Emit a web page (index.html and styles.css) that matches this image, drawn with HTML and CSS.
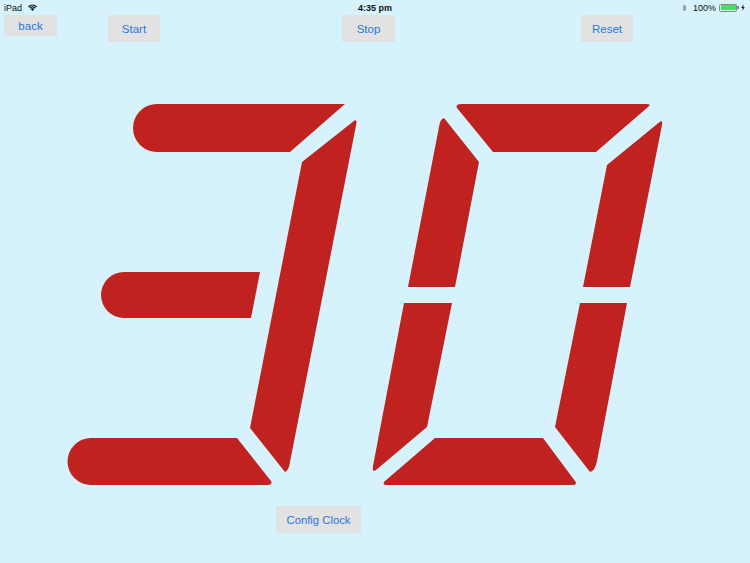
FILE: index.html
```html
<!DOCTYPE html>
<html>
<head>
<meta charset="utf-8">
<link rel="stylesheet" href="styles.css">
</head>
<body>
<div class="status">
  <div class="st-left">
    <span>iPad</span>
    <svg class="wifi" width="9" height="7" viewBox="0 0 9 7">
      <path d="M4.5 7 L0 2.2 A6.5 6.5 0 0 1 9 2.2 Z" fill="#111"/>
      <path d="M1.2 3.4 A4.8 4.8 0 0 1 7.8 3.4" fill="none" stroke="#d6f3fd" stroke-width="0.8"/>
      <path d="M2.4 4.7 A3 3 0 0 1 6.6 4.7" fill="none" stroke="#d6f3fd" stroke-width="0.8"/>
    </svg>
  </div>
  <div class="st-center">4:35 pm</div>
  <div class="st-right">
    <svg class="bt" width="5" height="8" viewBox="0 0 5 8">
      <path d="M0.5 2 L4 5.2 L2.2 7 L2.2 1 L4 2.8 L0.5 6" fill="none" stroke="#777" stroke-width="0.8"/>
    </svg>
    <span>100%</span>
    <span class="battery"><span class="level"></span></span>
    <svg class="bolt" width="4" height="7" viewBox="0 0 4 7">
      <path d="M2.6 0 L0.3 3.9 L1.8 3.9 L1.3 7 L3.7 3 L2.2 3 Z" fill="#111"/>
    </svg>
  </div>
</div>

<div class="toolbar">
  <button class="btn btn-back">back</button>
  <button class="btn btn-start">Start</button>
  <button class="btn btn-stop">Stop</button>
  <button class="btn btn-reset">Reset</button>
</div>

<svg class="display" width="750" height="464" viewBox="0 42 750 464">
  <g class="seg">
    <!-- digit 3 -->
    <path d="M157,104 L345,104 L290,152 L157,152 A24,24 0 0 1 157,104 Z"/>
    <path d="M354.5,120.5 Q357,119.5 356.5,123 L290,462 Q289,470 285,472 L250,428 L302,162 Z"/>
    <path d="M124,272 L260,272 L251,318 L124,318 A23,23 0 0 1 124,272 Z"/>
    <path d="M91,438 L237,438 L271,481 Q273,485 267,485 L91,485 A23.5,23.5 0 0 1 91,438 Z"/>
    <!-- digit 0 -->
    <path d="M462,104 L646,104 Q652,104 648,107 L596,152 L493,152 L457,108 Q455,104 462,104 Z"/>
    <path d="M444,118 L479,162 L455,287 L408,287 L439,127 Q440,119 444,118 Z"/>
    <path d="M659,122.5 Q663,119 662,125 L630,287 L583,287 L607,165 Z"/>
    <path d="M404,303 L452,303 L427,427 L376,470 Q372,473 373,466 Z"/>
    <path d="M435,438 L543,438 L575,481 Q578,485 572,485 L388,485 Q381,485 385,481 Z"/>
    <path d="M580,303 L627,303 L597,461 Q595,471 590,472 L555,427 Z"/>
  </g>
</svg>

<div class="footer">
  <button class="btn btn-config">Config Clock</button>
</div>
</body>
</html>
```

FILE: styles.css
```css
html, body {
  margin: 0;
  padding: 0;
}
body {
  width: 750px;
  height: 563px;
  overflow: hidden;
  background: #d6f3fd;
  font-family: "Liberation Sans", Arial, sans-serif;
}
.status {
  height: 15px;
  display: grid;
  grid-template-columns: 1fr auto 1fr;
  align-items: center;
  font-size: 9px;
  color: #111;
}
.st-left {
  display: flex;
  align-items: center;
  gap: 6px;
  padding-left: 4px;
}
.st-center {
  font-weight: bold;
}
.st-right {
  display: flex;
  align-items: center;
  justify-content: flex-end;
  gap: 3px;
  padding-right: 5px;
}
.st-right .bt {
  margin-right: 3px;
}
.battery {
  position: relative;
  width: 15px;
  height: 5px;
  border: 0.8px solid #888;
  border-radius: 1.5px;
  padding: 0.5px;
  display: flex;
}
.battery::after {
  content: "";
  position: absolute;
  right: -2.5px;
  top: 1.5px;
  width: 1.5px;
  height: 2.5px;
  background: #888;
}
.battery .level {
  flex: 1;
  background: #4cd964;
  border-radius: 0.5px;
}
.bolt {
  margin-left: 1px;
}
.toolbar {
  height: 27px;
  display: flex;
  align-items: flex-start;
  padding-left: 4px;
}
.btn {
  border: none;
  padding: 0;
  margin: 0;
  background: #e2e2e2;
  color: #2878dc;
  font-family: "Liberation Sans", Arial, sans-serif;
  font-size: 11.5px;
  height: 27px;
  width: 52px;
}
.btn-back {
  width: 53px;
  height: 21px;
}
.btn-start {
  margin-left: 51px;
}
.btn-stop {
  width: 53px;
  margin-left: 182px;
}
.btn-reset {
  margin-left: 186px;
}
.display {
  display: block;
}
.seg path {
  fill: #c0231f;
}
.footer {
  padding-left: 276px;
}
.btn-config {
  width: 85px;
  font-size: 11.3px;
}
```
